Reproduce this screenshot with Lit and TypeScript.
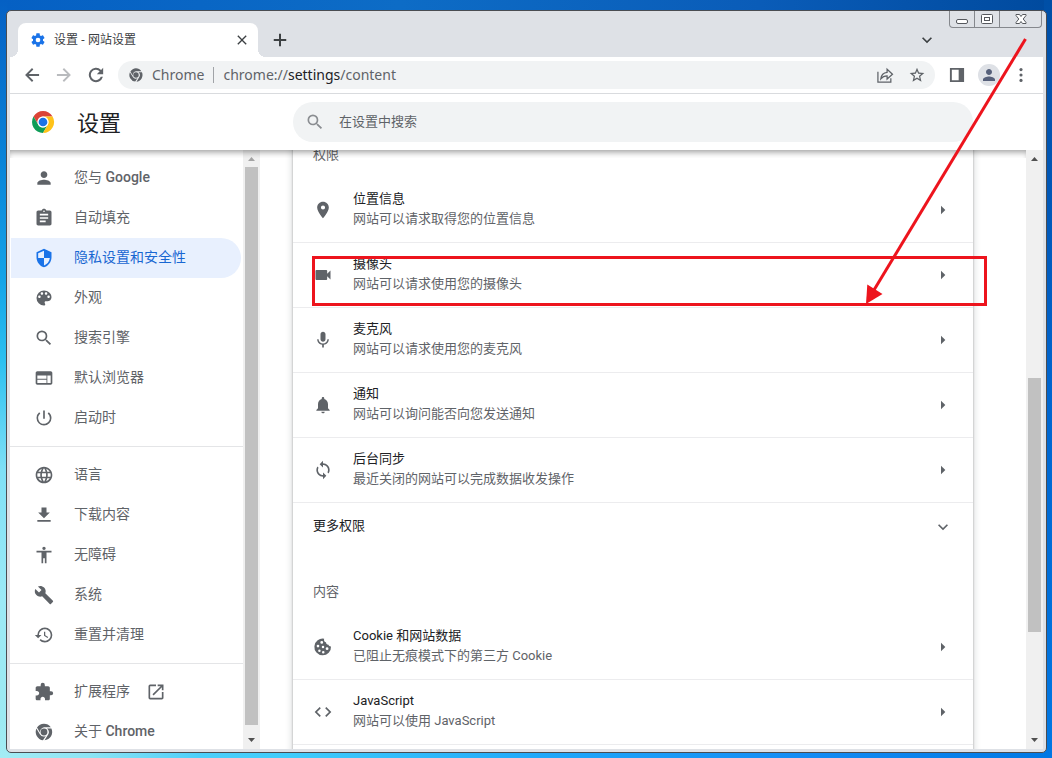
import { LitElement, html, css, svg, nothing, TemplateResult, SVGTemplateResult } from "lit";
import { customElement, property } from "lit/decorators.js";
import { classMap } from "lit/directives/class-map.js";

const p = (d: string) => svg`<path d=${d} />`;

const chromeMono = svg`
  <circle cx="12" cy="12" r="4.1" />
  <path d="M12 6.3h8.2A10 10 0 0 0 3.6 6.6l3.7 6.4A5.7 5.7 0 0 1 12 6.3z" />
  <path d="M2.9 7.9A10 10 0 0 0 10.8 21.9l3.4-5.1A5.7 5.7 0 0 1 7 14.7z" />
  <path d="M20.9 7.9h-5.2a5.7 5.7 0 0 1 1.3 7.2L12.7 22A10 10 0 0 0 20.9 7.9z" />`;

const ICONS: Record<string, SVGTemplateResult> = {
  person: p("M12 12c2.21 0 4-1.79 4-4s-1.79-4-4-4-4 1.79-4 4 1.79 4 4 4zm0 2c-2.67 0-8 1.34-8 4v2h16v-2c0-2.66-5.33-4-8-4z"),
  assignment: p("M19 3h-4.18C14.4 1.84 13.3 1 12 1c-1.3 0-2.4.84-2.82 2H5c-1.1 0-2 .9-2 2v14c0 1.1.9 2 2 2h14c1.1 0 2-.9 2-2V5c0-1.1-.9-2-2-2zm-7 0c.55 0 1 .45 1 1s-.45 1-1 1-1-.45-1-1 .45-1 1-1zm2 14H7v-2h7v2zm3-4H7v-2h10v2zm0-4H7V7h10v2z"),
  security: p("M12 1L3 5v6c0 5.55 3.84 10.74 9 12 5.16-1.26 9-6.45 9-12V5l-9-4zm0 10.99h7c-.53 4.12-3.28 7.79-7 8.94V12H5V6.3l7-3.11v8.8z"),
  palette: p("M12 3a9 9 0 0 0 0 18c.83 0 1.5-.67 1.5-1.5 0-.39-.15-.74-.39-1.01-.23-.26-.38-.61-.38-.99 0-.83.67-1.5 1.5-1.5H16c2.76 0 5-2.24 5-5 0-4.42-4.03-8-9-8zm-5.5 9c-.83 0-1.5-.67-1.5-1.5S5.67 9 6.500 9 8 9.670 8 10.500 7.330 12 6.500 12zm3-4C8.670 8 8 7.330 8 6.500S8.670 5 9.500 5s1.500.67 1.500 1.500S10.330 8 9.500 8zm5 0c-.83 0-1.500-.67-1.500-1.500S13.670 5 14.500 5s1.500.67 1.500 1.500S15.330 8 14.500 8zm3 4c-.83 0-1.500-.67-1.500-1.500S16.670 9 17.500 9s1.500.67 1.500 1.500-.67 1.500-1.500 1.500z"),
  search: p("M15.500 14h-.79l-.28-.27A6.471 6.471 0 0 0 16 9.500 6.500 6.500 0 1 0 9.500 16c1.610 0 3.090-.59 4.230-1.570l.27.28v.79l5 4.990L20.490 19l-4.990-5zm-6 0C7.010 14 5 11.990 5 9.500S7.010 5 9.500 5 14 7.010 14 9.500 11.990 14 9.500 14z"),
  web: p("M20 4H4c-1.100 0-1.990.9-1.990 2L2 18c0 1.100.9 2 2 2h16c1.100 0 2-.9 2-2V6c0-1.100-.9-2-2-2zm-5 14H4v-4h11v4zm0-5H4V9h11v4zm5 5h-4V9h4v9z"),
  power: p("M13 3h-2v10h2V3zm4.830 2.170l-1.420 1.420A6.920 6.920 0 0 1 19 12c0 3.870-3.130 7-7 7A6.995 6.995 0 0 1 7.580 6.580L6.170 5.170A8.932 8.932 0 0 0 3 12a9 9 0 0 0 18 0c0-2.740-1.230-5.180-3.170-6.830z"),
  language: p("M11.990 2C6.470 2 2 6.480 2 12s4.470 10 9.990 10C17.520 22 22 17.520 22 12S17.520 2 11.990 2zm6.930 6h-2.950a15.650 15.650 0 0 0-1.380-3.560A8.030 8.030 0 0 1 18.920 8zM12 4.040c.83 1.200 1.480 2.530 1.910 3.960h-3.820c.43-1.430 1.080-2.760 1.910-3.960zM4.260 14C4.100 13.360 4 12.690 4 12s.1-1.360.26-2h3.380c-.08.66-.14 1.320-.14 2 0 .68.06 1.340.14 2H4.260zm.82 2h2.950c.32 1.250.78 2.450 1.380 3.560A7.987 7.987 0 0 1 5.080 16zm2.950-8H5.080a7.987 7.987 0 0 1 4.330-3.560A15.650 15.650 0 0 0 8.030 8zM12 19.960c-.83-1.200-1.480-2.530-1.910-3.960h3.820c-.43 1.430-1.080 2.760-1.910 3.960zM14.340 14H9.660c-.09-.66-.16-1.320-.16-2 0-.68.07-1.350.16-2h4.680c.09.65.16 1.320.16 2 0 .68-.07 1.340-.16 2zm.25 5.560c.6-1.110 1.060-2.310 1.380-3.560h2.950a8.030 8.030 0 0 1-4.330 3.560zM16.360 14c.08-.66.14-1.320.14-2 0-.68-.06-1.340-.14-2h3.380c.16.64.26 1.310.26 2s-.1 1.360-.26 2h-3.380z"),
  download: p("M19 9h-4V3H9v6H5l7 7 7-7zM4 18v2h16v-2H4z"),
  accessibility: p("M12 2c1.100 0 2 .9 2 2s-.9 2-2 2-2-.9-2-2 .9-2 2-2zm9 7h-6v13h-2v-6h-2v6H9V9H3V7h18v2z"),
  build: p("M22.700 19l-9.100-9.100c.9-2.300.4-5-1.500-6.900-2-2-5-2.400-7.400-1.300L9 6 6 9 1.600 4.700C.4 7.100.9 10.100 2.900 12.100c1.900 1.900 4.600 2.400 6.900 1.500l9.100 9.100c.4.4 1 .4 1.400 0l2.300-2.300c.5-.4.5-1.100.1-1.400z"),
  restore: p("M13 3a9 9 0 0 0-9 9H1l3.890 3.890.07.14L9 12H6c0-3.870 3.130-7 7-7s7 3.130 7 7-3.130 7-7 7c-1.930 0-3.680-.79-4.940-2.060l-1.420 1.420A8.954 8.954 0 0 0 13 21a9 9 0 0 0 0-18zm-1 5v5l4.280 2.540.72-1.210-3.500-2.080V8H12z"),
  extension: p("M20.500 11H19V7c0-1.100-.9-2-2-2h-4V3.500a2.500 2.500 0 0 0-5 0V5H4c-1.100 0-1.990.9-1.990 2v3.800H3.500c1.490 0 2.700 1.210 2.700 2.700s-1.210 2.700-2.700 2.700H2V20c0 1.100.9 2 2 2h3.800v-1.500c0-1.490 1.210-2.700 2.700-2.700 1.490 0 2.700 1.210 2.700 2.700V22H17c1.100 0 2-.9 2-2v-4h1.500a2.500 2.500 0 0 0 0-5z"),
  launch: p("M19 19H5V5h7V3H5a2 2 0 0 0-2 2v14a2 2 0 0 0 2 2h14c1.100 0 2-.9 2-2v-7h-2v7zM14 3v2h3.590l-9.830 9.830 1.410 1.410L19 6.410V10h2V3h-7z"),
  chrome: chromeMono,
  location: p("M12 2C8.130 2 5 5.130 5 9c0 5.250 7 13 7 13s7-7.750 7-13c0-3.870-3.130-7-7-7zm0 9.500a2.500 2.500 0 0 1 0-5 2.500 2.500 0 0 1 0 5z"),
  camera: p("M17 10.500V7c0-.55-.45-1-1-1H4c-.55 0-1 .45-1 1v10c0 .55.45 1 1 1h12c.55 0 1-.45 1-1v-3.500l4 4v-11l-4 4z"),
  mic: p("M12 14c1.660 0 2.990-1.340 2.990-3L15 5c0-1.660-1.340-3-3-3S9 3.340 9 5v6c0 1.660 1.340 3 3 3zm5.300-3c0 3-2.540 5.100-5.300 5.100S6.700 14 6.700 11H5c0 3.410 2.720 6.230 6 6.720V21h2v-3.280c3.280-.48 6-3.300 6-6.720h-1.700z"),
  bell: p("M12 22c1.100 0 2-.9 2-2h-4a2 2 0 0 0 2 2zm6-6v-5c0-3.070-1.640-5.640-4.500-6.320V4c0-.83-.67-1.500-1.500-1.500s-1.500.67-1.500 1.500v.68C7.630 5.360 6 7.920 6 11v5l-2 2v1h16v-1l-2-2z"),
  sync: p("M12 4V1L8 5l4 4V6c3.310 0 6 2.690 6 6 0 1.010-.25 1.970-.7 2.800l1.460 1.460A7.930 7.930 0 0 0 20 12c0-4.420-3.580-8-8-8zm0 14c-3.310 0-6-2.690-6-6 0-1.010.25-1.970.7-2.800L5.240 7.740A7.930 7.930 0 0 0 4 12c0 4.420 3.580 8 8 8v3l4-4-4-4v3z"),
  cookie: svg`<path fill-rule="evenodd" d="M21.6 11.300c-1.300.2-2.700-.6-3-2-1.800.1-3-1.200-3-2.900-1.900-.3-2.900-2.200-2.200-4.300A10 10 0 1 0 21.600 11.300zM10.500 4.800a1.700 1.700 0 1 1 0 3.400 1.700 1.700 0 0 1 0-3.400zM6 9.300a1.600 1.600 0 1 1 0 3.200 1.600 1.600 0 0 1 0-3.200zM12 10.600a1.500 1.500 0 1 1 0 3 1.500 1.500 0 0 1 0-3zM7.700 15a1.500 1.500 0 1 1 0 3 1.500 1.500 0 0 1 0-3zM12.300 16.700a1.500 1.500 0 1 1 0 3 1.500 1.500 0 0 1 0-3zM16.900 12.300a1.700 1.700 0 1 1 0 3.400 1.700 1.700 0 0 1 0-3.400z" />`,
  code: p("M9.400 16.600L4.800 12l4.600-4.600L8 6l-6 6 6 6 1.400-1.400zm5.200 0l4.600-4.600-4.600-4.600L16 6l6 6-6 6-1.400-1.400z"),
  caret: p("M9.600 7l5.200 5-5.200 5z"),
  expand: p("M7.410 8.590L12 13.170l4.590-4.580L18 10l-6 6-6-6z"),
  gear: p("M19.430 12.980c.04-.32.07-.64.07-.98s-.03-.66-.07-.98l2.110-1.650c.19-.15.24-.42.12-.64l-2-3.460c-.12-.22-.39-.3-.61-.22l-2.490 1c-.52-.4-1.080-.73-1.690-.98l-.38-2.650A.488.488 0 0 0 14 2h-4c-.25 0-.46.18-.49.42l-.38 2.650c-.61.25-1.170.59-1.690.98l-2.490-1c-.23-.09-.49 0-.61.22l-2 3.460c-.13.22-.07.49.12.64l2.110 1.650c-.04.32-.07.65-.07.98s.03.66.07.98l-2.110 1.650c-.19.15-.24.42-.12.64l2 3.460c.12.22.39.3.61.22l2.490-1c.52.4 1.080.73 1.690.98l.38 2.650c.03.24.24.42.49.42h4c.25 0 .46-.18.49-.42l.38-2.650c.61-.25 1.170-.59 1.690-.98l2.490 1c.23.09.49 0 .61-.22l2-3.460c.12-.22.07-.49-.12-.64l-2.110-1.650zM12 15.500A3.500 3.500 0 1 1 12 8.500a3.500 3.500 0 0 1 0 7z"),
  close: p("M19 6.410L17.590 5 12 10.590 6.410 5 5 6.410 10.590 12 5 17.590 6.410 19 12 13.410 17.590 19 19 17.590 13.410 12z"),
  plus: p("M19.500 13.200h-6.300v6.300h-2.400v-6.300H4.500v-2.400h6.300V4.500h2.400v6.300h6.300v2.400z"),
  back: p("M20.500 10.800H8.100l5.500-5.500L12 3.700 3.700 12l8.300 8.300 1.600-1.600-5.500-5.500h12.400v-2.400z"),
  forward: p("M12 3.700l-1.600 1.600 5.500 5.500H3.500v2.400h12.400l-5.500 5.500 1.600 1.600 8.300-8.300z"),
  reload: p("M18.100 5.900A8.600 8.600 0 1 0 20.300 14.200h-2.500A6.200 6.200 0 1 1 16.400 7.600L13 11h7.600V3.400z"),
  share: svg`<path fill="none" stroke="currentColor" stroke-width="1.500" d="M3.500 8v12.500h15.500v-4.500M7 16.500c.6-5 3.200-7.300 7.500-7.700V5l6.500 6-6.500 5.800v-3.700c-3.200 0-5.500 1-7.500 3.400z" />`,
  star: p("M20.800 9.700l-6.400-.6L12 3.200 9.600 9.100l-6.400.6 4.900 4.200-1.500 6.200L12 16.800l5.400 3.300-1.500-6.200zM12 15l-3.100 1.900.8-3.600-2.700-2.400 3.600-.3L12 7.200l1.400 3.400 3.600.3-2.700 2.400.8 3.600z"),
  panel: svg`<path fill-rule="evenodd" d="M3.500 3.500h17v17h-17zM5.800 5.800v12.400h8.200V5.800z" />`,
  more: svg`<circle cx="12" cy="5.500" r="1.900" /><circle cx="12" cy="12" r="1.900" /><circle cx="12" cy="18.500" r="1.900" />`,
};

@customElement("ui-icon")
export class UiIcon extends LitElement {
  @property() name = "";
  static styles = css`
    :host { display: block; flex: none; width: 20px; height: 20px; }
    svg { display: block; width: 100%; height: 100%; fill: currentColor; }
  `;
  render() {
    return html`<svg viewBox="0 0 24 24" aria-hidden="true">${ICONS[this.name]}</svg>`;
  }
}

@customElement("scroll-bar")
export class ScrollBar extends LitElement {
  @property({ type: Number }) before = 0;
  @property({ type: Number }) thumb = 1;
  @property({ type: Number }) after = 0;
  @property({ type: Boolean }) atTop = false;
  static styles = css`
    :host { display: flex; flex-direction: column; flex: none; width: 17px; background: #f0f0f0; }
    svg { display: block; flex: none; width: 17px; height: 17px; fill: #505050; }
    .dim { fill: #a3a3a3; }
    .track { flex: 1; display: flex; flex-direction: column; padding: 0 2px; }
    .thumb { background: #c1c1c1; }
  `;
  render() {
    return html`
      <svg class=${classMap({ dim: this.atTop })} viewBox="0 0 17 17"><path d="M5 11l3.500-4 3.500 4z" /></svg>
      <div class="track">
        <div style="flex-grow:${this.before}"></div>
        <div class="thumb" style="flex-grow:${this.thumb}"></div>
        <div style="flex-grow:${this.after}"></div>
      </div>
      <svg viewBox="0 0 17 17"><path d="M5 6l3.500 4 3.500-4z" /></svg>`;
  }
}

interface NavItem { icon: string; label: TemplateResult; selected?: boolean; external?: boolean; }

const NAV: NavItem[][] = [
  [
    { icon: "person", label: html`您与 <b>Google</b>` },
    { icon: "assignment", label: html`自动填充` },
    { icon: "security", label: html`隐私设置和安全性`, selected: true },
    { icon: "palette", label: html`外观` },
    { icon: "search", label: html`搜索引擎` },
    { icon: "web", label: html`默认浏览器` },
    { icon: "power", label: html`启动时` },
  ],
  [
    { icon: "language", label: html`语言` },
    { icon: "download", label: html`下载内容` },
    { icon: "accessibility", label: html`无障碍` },
    { icon: "build", label: html`系统` },
    { icon: "restore", label: html`重置并清理` },
  ],
  [
    { icon: "extension", label: html`扩展程序`, external: true },
    { icon: "chrome", label: html`关于 <b>Chrome</b>` },
  ],
];

@customElement("settings-nav")
export class SettingsNav extends LitElement {
  static styles = css`
    :host { display: flex; flex: none; width: 250px; min-height: 0; overflow: hidden; }
    nav { flex: 1; min-width: 0; overflow: hidden; }
    ul { list-style: none; margin: 0; padding: 8px 2px 8px 1px; }
    ul + ul { border-top: 1px solid #e4e5e7; }
    a {
      display: flex; align-items: center; height: 40px; padding-left: 23px;
      border-radius: 0 20px 20px 0; color: #5f6368; text-decoration: none;
      font-size: 14px; line-height: 20px;
    }
    a.selected { background: #e8f0fe; color: #1967d2; }
    a.selected ui-icon { color: #1a73e8; }
    .label { margin: 0 16px 0 20px; padding-bottom: 2px; }
    b { font-weight: 500; }
  `;
  render() {
    return html`
      <nav aria-label="设置">
        ${NAV.map((group) => html`<ul>${group.map((i) => html`
          <li><a href="#" class=${classMap({ selected: !!i.selected })}>
            <ui-icon name=${i.icon}></ui-icon><span class="label">${i.label}</span>
            ${i.external ? html`<ui-icon name="launch"></ui-icon>` : nothing}
          </a></li>`)}</ul>`)}
      </nav>
      <scroll-bar .atTop=${true} .thumb=${558} .after=${7}></scroll-bar>`;
  }
}

interface Row { icon: string; title: string; detail: string; }

const PERMISSIONS: Row[] = [
  { icon: "location", title: "位置信息", detail: "网站可以请求取得您的位置信息" },
  { icon: "camera", title: "摄像头", detail: "网站可以请求使用您的摄像头" },
  { icon: "mic", title: "麦克风", detail: "网站可以请求使用您的麦克风" },
  { icon: "bell", title: "通知", detail: "网站可以询问能否向您发送通知" },
  { icon: "sync", title: "后台同步", detail: "最近关闭的网站可以完成数据收发操作" },
];
const CONTENT: Row[] = [
  { icon: "cookie", title: "Cookie 和网站数据", detail: "已阻止无痕模式下的第三方 Cookie" },
  { icon: "code", title: "JavaScript", detail: "网站可以使用 JavaScript" },
];

@customElement("settings-content")
export class SettingsContent extends LitElement {
  static styles = css`
    :host { display: flex; flex: 1; min-width: 0; min-height: 0; overflow: hidden; }
    main { flex: 1; min-width: 0; display: flex; justify-content: center; padding-right: 20px; overflow: hidden; }
    .card {
      flex: 0 1 680px; min-height: 700px; margin-top: -35px; align-self: flex-start; background: #fff;
      box-shadow: 0 0 2px rgba(60, 64, 67, 0.4), 0 2px 6px 2px rgba(60, 64, 67, 0.15);
    }
    h2 {
      margin: 0; padding: 30px 20px 13px; font-size: 13px; line-height: 20px;
      font-weight: 400; color: #5f6368;
    }
    button {
      box-sizing: border-box; width: 100%; display: flex; align-items: center; gap: 20px;
      border: 0; background: none; padding: 11px 20px; color: #5f6368; text-align: left;
      font: inherit; font-size: 13px; line-height: 20px;
    }
    .row { border-bottom: 1px solid #ececee; }
    .text { flex: 1; display: grid; padding-bottom: 2px; }
    .title { color: #202124; }
    .more { padding: 13px 20px 14px; }
  `;
  private row = (r: Row) => html`
    <button class="row">
      <ui-icon name=${r.icon}></ui-icon>
      <span class="text"><span class="title">${r.title}</span><span>${r.detail}</span></span>
      <ui-icon name="caret"></ui-icon>
    </button>`;
  render() {
    return html`
      <main>
        <div class="card">
          <h2>权限</h2>
          ${PERMISSIONS.map(this.row)}
          <button class="more"><span class="text title">更多权限</span><ui-icon name="expand"></ui-icon></button>
          <h2>内容</h2>
          ${CONTENT.map(this.row)}
        </div>
      </main>
      <scroll-bar .before=${211} .thumb=${254} .after=${100}></scroll-bar>`;
  }
}

@customElement("app-root")
export class AppRoot extends LitElement {
  static styles = css`
    :host {
      display: block; position: relative; box-sizing: border-box; height: 100vh; overflow: hidden;
      padding: 10px 5px 5px 6px;
      font-family: Roboto, "Noto Sans CJK SC", sans-serif; color: #202124;
      background:
        linear-gradient(180deg, #0560c4 0, #0a84d8 160px, #14a4e8 280px, #2cc0f0 360px, #7fe0f6 470px, #9ceaf6 600px, #9ceaf2 720px, #a4ecf4 100%) left / 7px 100% no-repeat,
        linear-gradient(180deg, #004fa6 0, #0058b8 200px, #0066d0 400px, #0078e4 100%) right / 8px 100% no-repeat,
        linear-gradient(90deg, #a4ecf4 0, #8ce4f4 90px, #4ccffa 200px, #3fccfb 290px, #1fa8fa 540px, #148cf4 800px, #0078e4 100%) bottom / 100% 8px no-repeat,
        linear-gradient(90deg, #0560c4 0, #0d6cc6 400px, #0a5cb8 760px, #004a9e 100%);
    }
    .window {
      position: relative; box-sizing: border-box; height: 100%; display: flex; flex-direction: column;
      padding: 0 3px 3px; border: 1px solid #4a4d52; border-radius: 5px; background: #dee1e6; overflow: hidden;
    }
    button { border: 0; padding: 0; background: none; color: inherit; font: inherit; }
    .tabs { flex: none; display: flex; align-items: stretch; height: 46px; padding: 12px 0 0 8px; box-sizing: border-box; color: #3c4043; }
    .tab {
      position: relative; flex: 0 1 240px; box-sizing: border-box; display: flex; align-items: center; gap: 8px;
      padding: 0 8px 0 12px; background: #fff; border-radius: 8px 8px 0 0; font-size: 12px;
      font-family: "Open Sans", "Noto Sans CJK SC", sans-serif;
    }
    .tab::before, .tab::after { content: ""; position: absolute; bottom: 0; width: 8px; height: 8px; }
    .tab::before { left: -8px; background: radial-gradient(circle at 0 0, transparent 8px, #fff 8px); }
    .tab::after { right: -8px; background: radial-gradient(circle at 100% 0, transparent 8px, #fff 8px); }
    .tab .name { flex: 1; padding-bottom: 2px; }
    .gear { width: 16px; height: 16px; color: #1a73e8; }
    .small { width: 16px; height: 16px; }
    .new { padding: 0 12px; }
    .search-tabs { margin: 0 106px 0 auto; }
    .controls {
      position: absolute; top: 0; right: 4px; display: flex; height: 17px; box-sizing: border-box;
      border: 1px solid #85888d; border-top: 0; border-radius: 0 0 4px 4px;
    }
    .controls button { width: 25px; height: 16px; border-right: 1px solid #85888d; box-sizing: border-box; }
    .controls button:last-child { width: 41px; border-right: 0; }
    .controls svg { display: block; margin: 0 auto; width: 14px; height: 16px; fill: #fff; stroke: #55585d; }
    .toolbar {
      flex: none; display: flex; align-items: center; height: 37px; box-sizing: border-box;
      padding: 0 12px; background: #fff; border-bottom: 1px solid #d9dbde; color: #5f6368;
    }
    .nav { display: flex; gap: 12px; margin-right: 12px; }
    .off { color: #b9bbbe; }
    .address {
      flex: 1; min-width: 0; display: flex; align-items: center; height: 28px; padding: 0 8px 0 10px;
      border-radius: 14px; background: #f1f3f4; font-family: "Noto Sans", "Open Sans", sans-serif; font-size: 14px;
    }
    .chip, .url { padding-bottom: 2px; }
    .chip { margin: 0 9px 0 8px; }
    .url { flex: 1; margin-left: 9px; }
    .url em { font-style: normal; color: #202124; }
    .bar { width: 1px; height: 16px; background: #a0a3a7; }
    .address .acts { display: flex; gap: 12px; }
    .right { display: flex; align-items: center; gap: 11px; margin-left: 12px; }
    .avatar { width: 22px; height: 22px; border-radius: 50%; background: #dee1e6; color: #56607a; display: grid; place-items: center; }
    .avatar ui-icon { width: 18px; height: 18px; }
    header { flex: none; display: flex; align-items: center; height: 56px; background: #fff; }
    .brand { flex: none; display: flex; align-items: center; gap: 22px; width: 250px; box-sizing: border-box; padding-left: 21px; }
    .logo { width: 24px; height: 24px; }
    h1 { margin: 0; padding-top: 3px; font-size: 22px; line-height: 32px; font-weight: 400; }
    .find-area { flex: 1; display: flex; justify-content: center; padding-right: 37px; }
    .find {
      flex: 0 1 680px; box-sizing: border-box; height: 40px; display: flex; align-items: center; gap: 14px;
      padding: 0 12px; border-radius: 20px; background: #f1f3f4; color: #8a8d91;
    }
    input { flex: 1; border: 0; outline: 0; padding: 0; background: none; font: inherit; font-size: 13px; line-height: 20px; }
    input::placeholder { color: #5f6368; opacity: 1; }
    .body { position: relative; flex: 1; min-height: 0; display: flex; background: #fff; }
    .body::after {
      content: ""; position: absolute; inset: 0 17px auto 0; height: 8px;
      box-shadow: inset 0 5px 6px -3px rgba(0, 0, 0, 0.4); pointer-events: none;
    }
    .marks { position: absolute; top: 0; left: 0; width: 1052px; height: 758px; pointer-events: none; }
  `;

  render() {
    return html`
      <div class="window">
        <div class="tabs">
          <div class="tab">
            <ui-icon class="gear" name="gear"></ui-icon>
            <span class="name">设置 - 网站设置</span>
            <button aria-label="关闭标签页"><ui-icon class="small" name="close"></ui-icon></button>
          </div>
          <button class="new" aria-label="新标签页"><ui-icon name="plus"></ui-icon></button>
          <button class="search-tabs" aria-label="搜索标签页"><ui-icon name="expand"></ui-icon></button>
        </div>
        <div class="controls">
          <button aria-label="最小化"><svg viewBox="0 0 14 16"><rect x="1.500" y="8.500" width="11" height="4" rx="1.500" /></svg></button>
          <button aria-label="最大化"><svg viewBox="0 0 14 16"><rect x="1.500" y="3.500" width="11" height="9" rx="1" /><rect x="4.500" y="6.500" width="5" height="3" /></svg></button>
          <button aria-label="关闭"><svg viewBox="0 0 14 16"><path d="M2 3.500h3.500L7 5.500l1.500-2H12v1L9.200 8l2.800 3.500v1H8.500L7 10.500l-1.500 2H2v-1L4.800 8 2 4.500z" /></svg></button>
        </div>
        <div class="toolbar">
          <div class="nav">
            <button aria-label="后退"><ui-icon name="back"></ui-icon></button>
            <button aria-label="前进" class="off"><ui-icon name="forward"></ui-icon></button>
            <button aria-label="重新加载"><ui-icon name="reload"></ui-icon></button>
          </div>
          <div class="address">
            <ui-icon class="small" name="chrome"></ui-icon>
            <span class="chip">Chrome</span><span class="bar"></span>
            <span class="url">chrome://<em>settings</em>/content</span>
            <span class="acts">
              <button aria-label="分享"><ui-icon name="share"></ui-icon></button>
              <button aria-label="收藏"><ui-icon name="star"></ui-icon></button>
            </span>
          </div>
          <div class="right">
            <button aria-label="侧边栏"><ui-icon name="panel"></ui-icon></button>
            <button aria-label="用户" class="avatar"><ui-icon name="person"></ui-icon></button>
            <button aria-label="更多"><ui-icon name="more"></ui-icon></button>
          </div>
        </div>
        <header>
          <div class="brand">
            <svg class="logo" viewBox="0 0 48 48" aria-hidden="true">
              <path fill="#db4437" d="M24 13h19.100A22 22 0 0 0 5 13l9.500 16.500A11 11 0 0 1 24 13z" />
              <path fill="#0f9d58" d="M5 13a22 22 0 0 0 19 33l9.500-16.500a11 11 0 0 1-19 0z" />
              <path fill="#ffc31a" d="M43.100 13H24a11 11 0 0 1 9.500 16.500L24 46A22 22 0 0 0 43.100 13z" />
              <circle cx="24" cy="24" r="11" fill="#fff" />
              <circle cx="24" cy="24" r="8.700" fill="#1a73e8" />
            </svg>
            <h1>设置</h1>
          </div>
          <div class="find-area">
            <label class="find">
              <ui-icon name="search"></ui-icon>
              <input type="text" placeholder="在设置中搜索" aria-label="在设置中搜索" />
            </label>
          </div>
        </header>
        <div class="body">
          <settings-nav></settings-nav>
          <settings-content></settings-content>
        </div>
      </div>
      <svg class="marks" viewBox="0 0 1052 758" fill="none" stroke="#ed141d" stroke-width="3" aria-hidden="true">
        <rect x="313.500" y="257.500" width="672" height="47" />
        <path d="M1025.500 39L874 290" />
        <path fill="#ed141d" stroke="none" d="M866 304l1.300-19.500L882.500 294z" />
      </svg>`;
  }
}
